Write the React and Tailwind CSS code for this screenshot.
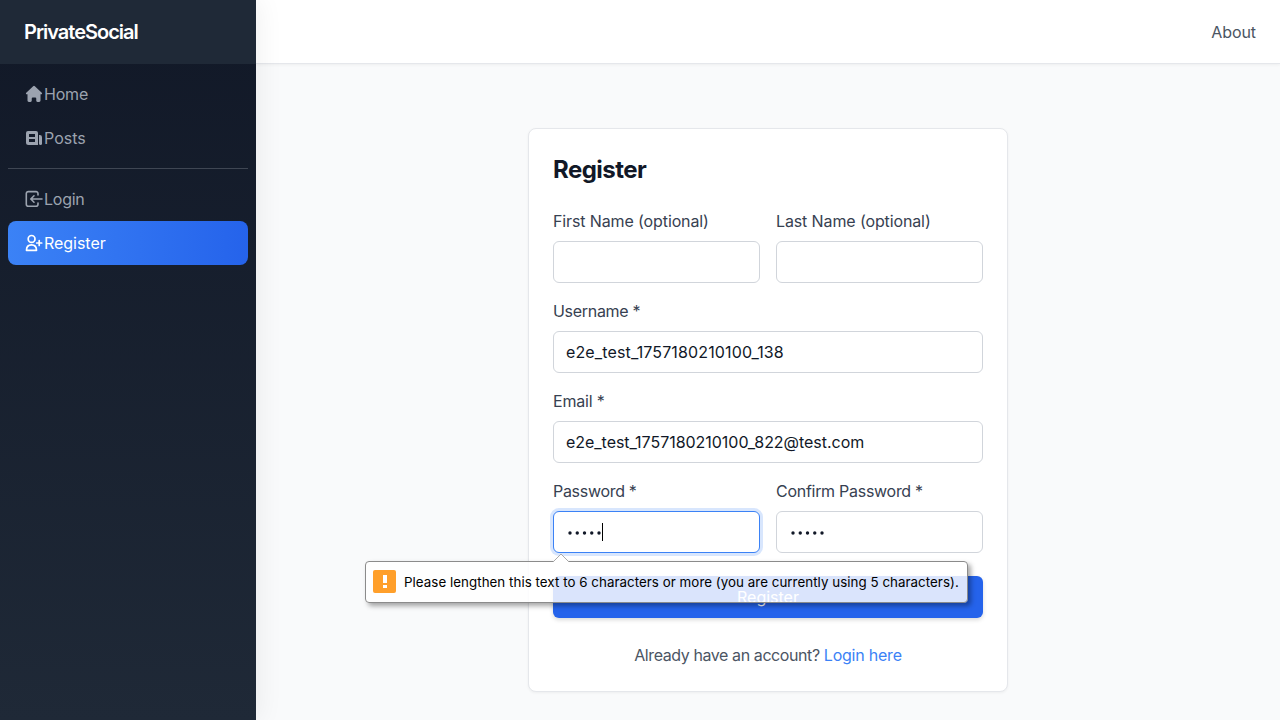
function HomeIcon() {
  return (
    <svg className="size-5 shrink-0" viewBox="0 0 20 20" fill="currentColor">
      <path d="M9.15 2.25a1.25 1.25 0 0 1 1.7 0l6.9 6.5c.7.66.25 1.600-.6 1.600h-.65v6.200c0 .83-.6 1.450-1.400 1.450h-1.600c-.83 0-1.250-.62-1.250-1.450v-2a1 1 0 0 0-1-1h-2.500a1 1 0 0 0-1 1v2c0 .83-.42 1.450-1.250 1.450H4.900c-.8 0-1.400-.62-1.400-1.450v-6.200h-.65c-.85 0-1.300-.94-.6-1.600z" />
    </svg>
  );
}

function PostsIcon() {
  return (
    <svg className="size-5 shrink-0" viewBox="0 0 20 20" fill="currentColor">
      <path fillRule="evenodd" d="M4 3h8a2 2 0 0 1 2 2v12H4.500A2.500 2.500 0 0 1 2 14.500V5a2 2 0 0 1 2-2zM5 6v3h6V6zM5 11v3h6v-3z" />
      <path d="M15 7h.8A2.200 2.200 0 0 1 18 9.200v6.300a1.500 1.500 0 0 1-3 0z" />
    </svg>
  );
}

function LoginIcon() {
  return (
    <svg className="size-5 shrink-0" viewBox="0 0 20 20" fill="none" stroke="currentColor" strokeWidth="1.6" strokeLinecap="round" strokeLinejoin="round">
      <path d="M14 6V4.800A2 2 0 0 0 12 2.600H4.300a2 2 0 0 0-2 2v10.600a2 2 0 0 0 2 2H12a2 2 0 0 0 2-2V14M18 10H7M10 6.800L6.800 10l3.200 3.200" />
    </svg>
  );
}

function RegisterIcon() {
  return (
    <svg className="size-5 shrink-0" viewBox="0 0 20 20" fill="none" stroke="currentColor" strokeWidth="1.7" strokeLinecap="round" strokeLinejoin="round">
      <circle cx="7.600" cy="5.900" r="3.400" />
      <path d="M2.500 17.300c0-3.500 1.900-5.500 5-5.500s5 2 5 5.500zM12.700 10h5M15.200 7.500v5" />
    </svg>
  );
}

function NavItem({ icon, label, active, labelClass = "" }) {
  return (
    <a className={`flex h-11 items-center rounded-lg px-4 ${active ? "bg-linear-to-r/srgb from-[#3b82f6] to-[#2563eb] text-white" : "text-[#9ca3af]"}`}>
      {icon}
      <span className={labelClass}>{label}</span>
    </a>
  );
}

function Field({ label, labelClass = "", focused, children }) {
  return (
    <div className="min-w-0 flex-1">
      <div className={`mb-2 leading-6 text-[#374151] ${labelClass}`}>{label}</div>
      <div className={`flex h-[42px] items-center rounded-md border bg-white px-3 text-[#111827] ${focused ? "border-[#3b82f6] shadow-[0_0_0_3px_rgba(59,130,246,0.2)]" : "border-[#d1d5db]"}`}>
        {children}
      </div>
    </div>
  );
}

function Dots() {
  return (
    <svg className="mt-[2px] h-1 w-9 shrink-0" viewBox="0 0 36 4" fill="currentColor">
      {[4, 11.25, 18.5, 25.75, 33].map((cx) => (
        <circle key={cx} cx={cx} cy="2" r="1.7" />
      ))}
    </svg>
  );
}

function ValidationBubble() {
  return (
    <div className="absolute left-[-188px] top-[50px] z-10 flex h-[42px] w-[603px] items-center rounded-[4px] border border-[#8b8b8b] bg-white/83 pl-[7px] shadow-[3px_3px_5px_rgba(0,0,0,0.35)]">
      <svg className="absolute left-[186px] top-[-9px] h-[9px] w-[18px]" viewBox="0 0 18 9">
        <path d="M1 9L9 1l8 8" fill="white" stroke="#aaa" />
      </svg>
      <span className="mb-px flex size-[23px] shrink-0 flex-col items-center justify-center gap-[2px] rounded-[2px] bg-[#ff9f2a]">
        <span className="h-[8px] w-[4px] bg-white" />
        <span className="h-[3px] w-[4px] bg-white" />
      </span>
      <span className="ml-2 whitespace-nowrap pt-px text-[13.333px] tracking-[0.045px] text-black">
        Please lengthen this text to 6 characters or more (you are currently using 5 characters).
      </span>
    </div>
  );
}

export default function App() {
  return (
    <div className="flex h-screen w-full overflow-hidden bg-[#f9fafb] font-['Inter',sans-serif] text-base">
      <aside className="z-10 flex w-64 shrink-0 flex-col bg-linear-to-b/srgb from-[#111827] to-[#1f2937] shadow-[4px_0_24px_rgba(0,0,0,0.06)]">
        <div className="flex h-16 shrink-0 items-center bg-[#1f2937] px-6 text-xl font-semibold tracking-[-1px] text-white">PrivateSocial</div>
        <nav className="p-2">
          <NavItem icon={<HomeIcon />} label="Home" labelClass="tracking-[-0.2px]" />
          <NavItem icon={<PostsIcon />} label="Posts" />
          <div className="my-2 h-px bg-[#3f4653]" />
          <NavItem icon={<LoginIcon />} label="Login" labelClass="tracking-[-0.25px]" />
          <NavItem icon={<RegisterIcon />} label="Register" active labelClass="tracking-[-0.03px]" />
        </nav>
      </aside>
      <div className="flex min-w-0 flex-1 flex-col">
        <header className="flex h-16 shrink-0 items-center justify-end border-b border-[#e5e7eb] bg-white px-6 tracking-[-0.1px] text-[#4b5563] shadow-[0_1px_3px_rgba(0,0,0,0.05)]">About</header>
        <main className="flex justify-center pt-16">
          <section className="h-[564px] w-[480px] rounded-lg border border-[#e5e7eb] bg-white p-6 shadow-[0_1px_3px_rgba(0,0,0,0.05)]">
            <h1 className="mb-[23px] pt-px text-2xl font-bold leading-8 tracking-[-0.55px] text-[#111827]">Register</h1>
            <div className="flex flex-col gap-4">
              <div className="flex gap-4">
                <Field label="First Name (optional)" labelClass="tracking-[-0.12px]" />
                <Field label="Last Name (optional)" labelClass="tracking-[-0.12px]" />
              </div>
              <div className="flex">
                <Field label="Username *" labelClass="tracking-[-0.3px]">
                  <span className="tracking-[0.14px]">e2e_test_1757180210100_138</span>
                </Field>
              </div>
              <div className="flex">
                <Field label="Email *" labelClass="tracking-[-0.2px]">
                  <span className="tracking-[-0.03px]">e2e_test_1757180210100_822@test.com</span>
                </Field>
              </div>
              <div className="flex gap-4">
                <Field label="Password *" labelClass="tracking-[-0.3px]" focused>
                  <Dots />
                  <span className="h-[18px] w-px bg-black" />
                </Field>
                <Field label="Confirm Password *" labelClass="tracking-[-0.28px]"><Dots /></Field>
              </div>
            </div>
            <div className="relative mt-[23px]">
              <button className="h-[42px] w-full rounded-md bg-[#2563eb] text-white shadow-[0_2px_4px_rgba(0,0,0,0.15)]">Register</button>
              <div className="absolute left-0 top-[-65px]"><ValidationBubble /></div>
            </div>
            <p className="mt-[25px] text-center leading-6 tracking-[-0.41px] text-[#4b5563]">
              Already have an account? <a className="tracking-[-0.22px] text-[#3b82f6]">Login here</a>
            </p>
          </section>
        </main>
      </div>
    </div>
  );
}
